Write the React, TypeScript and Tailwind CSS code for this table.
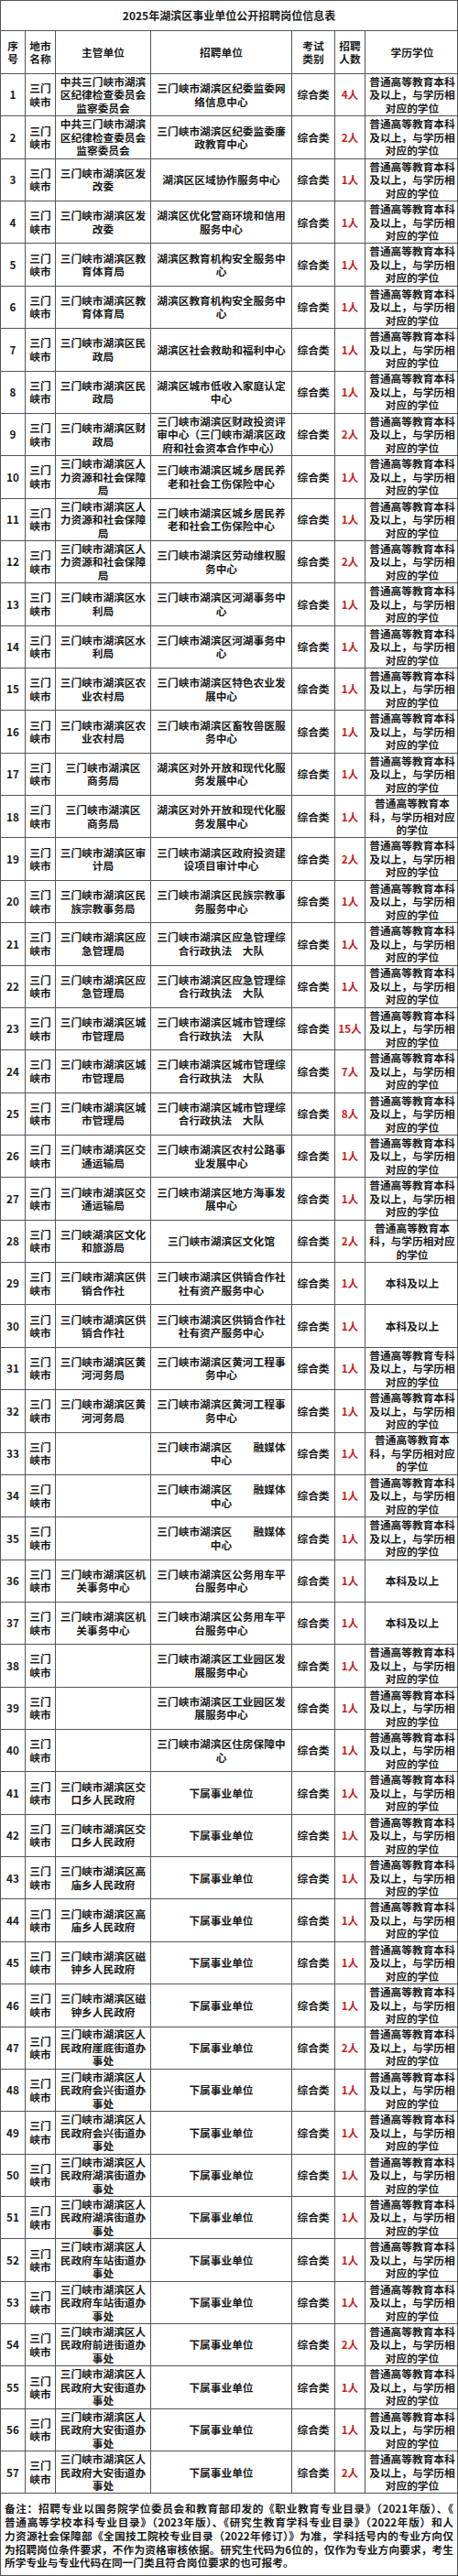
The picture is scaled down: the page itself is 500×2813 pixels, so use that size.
const SM = "三门\n峡市";
const STD = "普通高等教育本科\n及以上，与学历相\n对应的学位";
const BK = "普通高等教育本\n科，与学历相对应\n的学位";
const BKYS = "本科及以上";
const ZK = "普通高等教育专科\n及以上，与学历相\n对应的学位";

const JW = "中共三门峡市湖滨\n区纪律检查委员会\n监察委员会";
const RS = "三门峡市湖滨区人\n力资源和社会保障\n局";
const CG = "三门峡市湖滨区城\n市管理局";
const CGU = "三门峡市湖滨区城市管理综\n合行政执法　大队";
const RMT = "三门峡市湖滨区　　融媒体\n中心";
const XS = "下属事业单位";

const jd = (name: string) => `三门峡市湖滨区人\n民政府${name}街道办\n事处`;

// [主管单位, 招聘单位, 人数, 学历]
const rows: [string, string, string, string][] = [
  [JW, "三门峡市湖滨区纪委监委网\n络信息中心", "4人", STD],
  [JW, "三门峡市湖滨区纪委监委廉\n政教育中心", "2人", STD],
  ["三门峡市湖滨区发\n改委", "湖滨区区域协作服务中心", "1人", STD],
  ["三门峡市湖滨区发\n改委", "湖滨区优化营商环境和信用\n服务中心", "1人", STD],
  ["三门峡市湖滨区教\n育体育局", "湖滨区教育机构安全服务中\n心", "1人", STD],
  ["三门峡市湖滨区教\n育体育局", "湖滨区教育机构安全服务中\n心", "1人", STD],
  ["三门峡市湖滨区民\n政局", "湖滨区社会救助和福利中心", "1人", STD],
  ["三门峡市湖滨区民\n政局", "湖滨区城市低收入家庭认定\n中心", "1人", STD],
  ["三门峡市湖滨区财\n政局", "三门峡市湖滨区财政投资评\n审中心（三门峡市湖滨区政\n府和社会资本合作中心）", "2人", STD],
  [RS, "三门峡市湖滨区城乡居民养\n老和社会工伤保险中心", "1人", STD],
  [RS, "三门峡市湖滨区城乡居民养\n老和社会工伤保险中心", "1人", STD],
  [RS, "三门峡市湖滨区劳动维权服\n务中心", "2人", STD],
  ["三门峡市湖滨区水\n利局", "三门峡市湖滨区河湖事务中\n心", "1人", STD],
  ["三门峡市湖滨区水\n利局", "三门峡市湖滨区河湖事务中\n心", "1人", STD],
  ["三门峡市湖滨区农\n业农村局", "三门峡市湖滨区特色农业发\n展中心", "1人", STD],
  ["三门峡市湖滨区农\n业农村局", "三门峡市湖滨区畜牧兽医服\n务中心", "1人", STD],
  ["三门峡市湖滨区\n商务局", "湖滨区对外开放和现代化服\n务发展中心", "1人", STD],
  ["三门峡市湖滨区\n商务局", "湖滨区对外开放和现代化服\n务发展中心", "1人", BK],
  ["三门峡市湖滨区审\n计局", "三门峡市湖滨区政府投资建\n设项目审计中心", "2人", STD],
  ["三门峡市湖滨区民\n族宗教事务局", "三门峡市湖滨区民族宗教事\n务服务中心", "1人", STD],
  ["三门峡市湖滨区应\n急管理局", "三门峡市湖滨区应急管理综\n合行政执法　大队", "1人", STD],
  ["三门峡市湖滨区应\n急管理局", "三门峡市湖滨区应急管理综\n合行政执法　大队", "1人", STD],
  [CG, CGU, "15人", STD],
  [CG, CGU, "7人", STD],
  [CG, CGU, "8人", STD],
  ["三门峡市湖滨区交\n通运输局", "三门峡市湖滨区农村公路事\n业发展中心", "1人", STD],
  ["三门峡市湖滨区交\n通运输局", "三门峡市湖滨区地方海事发\n展中心", "1人", STD],
  ["三门峡湖滨区文化\n和旅游局", "三门峡市湖滨区文化馆", "2人", BK],
  ["三门峡市湖滨区供\n销合作社", "三门峡市湖滨区供销合作社\n社有资产服务中心", "1人", BKYS],
  ["三门峡市湖滨区供\n销合作社", "三门峡市湖滨区供销合作社\n社有资产服务中心", "1人", BKYS],
  ["三门峡市湖滨区黄\n河河务局", "三门峡市湖滨区黄河工程事\n务中心", "1人", ZK],
  ["三门峡市湖滨区黄\n河河务局", "三门峡市湖滨区黄河工程事\n务中心", "1人", STD],
  ["", RMT, "1人", BK],
  ["", RMT, "1人", STD],
  ["", RMT, "1人", STD],
  ["三门峡市湖滨区机\n关事务中心", "三门峡市湖滨区公务用车平\n台服务中心", "1人", BKYS],
  ["三门峡市湖滨区机\n关事务中心", "三门峡市湖滨区公务用车平\n台服务中心", "1人", BKYS],
  ["", "三门峡市湖滨区工业园区发\n展服务中心", "1人", STD],
  ["", "三门峡市湖滨区工业园区发\n展服务中心", "1人", STD],
  ["", "三门峡市湖滨区住房保障中\n心", "1人", STD],
  ["三门峡市湖滨区交\n口乡人民政府", XS, "1人", STD],
  ["三门峡市湖滨区交\n口乡人民政府", XS, "1人", STD],
  ["三门峡市湖滨区高\n庙乡人民政府", XS, "1人", STD],
  ["三门峡市湖滨区高\n庙乡人民政府", XS, "1人", STD],
  ["三门峡市湖滨区磁\n钟乡人民政府", XS, "1人", STD],
  ["三门峡市湖滨区磁\n钟乡人民政府", XS, "1人", STD],
  [jd("崖底"), XS, "2人", STD],
  [jd("会兴"), XS, "1人", STD],
  [jd("会兴"), XS, "1人", STD],
  [jd("湖滨"), XS, "1人", STD],
  [jd("湖滨"), XS, "1人", STD],
  [jd("车站"), XS, "1人", STD],
  [jd("车站"), XS, "1人", STD],
  [jd("前进"), XS, "2人", STD],
  [jd("大安"), XS, "1人", STD],
  [jd("大安"), XS, "1人", STD],
  [jd("大安"), XS, "2人", STD],
];

const noteLines = [
  "备注：招聘专业以国务院学位委员会和教育部印发的《职业教育专业目录》（2021年版）、《",
  "普通高等学校本科专业目录》（2023年版）、《研究生教育学科专业目录》（2022年版）和人",
  "力资源社会保障部《全国技工院校专业目录（2022年修订）》为准，学科括号内的专业方向仅",
  "为招聘岗位条件要求，不作为资格审核依据。研究生代码为6位的，仅作为专业方向要求，考生",
];

const grid = "grid grid-cols-[27px_33px_104px_154px_47px_33px_102px]";
const cell = "flex items-center justify-center text-center whitespace-pre-line border-r border-[#555] last:border-r-0";

export default function App() {
  return (
    <div className="w-[500px] bg-white text-[#1a1a1a] font-['Noto_Sans_CJK_SC',sans-serif] font-bold text-[11.7px] leading-[14.5px]">
      <div className="border border-[#555]">
        <div className="h-[33px] flex items-center justify-center border-b border-[#555] text-[12px]">
          2025年湖滨区事业单位公开招聘岗位信息表
        </div>
        <div className={`${grid} h-[47px] border-b border-[#555]`}>
          <div className={cell}>{"序\n号"}</div>
          <div className={cell}>{"地市\n名称"}</div>
          <div className={cell}>主管单位</div>
          <div className={cell}>招聘单位</div>
          <div className={cell}>{"考试\n类别"}</div>
          <div className={cell}>{"招聘\n人数"}</div>
          <div className={cell}>学历学位</div>
        </div>
        {rows.map(([dept, unit, count, edu], i) => (
          <div key={i} className={`${grid} h-[46.37px] border-b border-[#555]`}>
            <div className={cell}>{i + 1}</div>
            <div className={cell}>{SM}</div>
            <div className={`${cell} px-[3px]`}>{dept}</div>
            <div className={`${cell} px-[4px]`}>{unit}</div>
            <div className={cell}>综合类</div>
            <div className={`${cell} text-[#c81e1e]`}>{count}</div>
            <div className={`${cell} px-[3px]`}>{edu}</div>
          </div>
        ))}
        <div className="h-[89px] px-[4px] pt-[9px] leading-[14.7px]">
          {noteLines.map((line, i) => (
            <div key={i} className="text-justify [text-align-last:justify]">
              {line}
            </div>
          ))}
          <div>所学专业与专业代码在同一门类且符合岗位要求的也可报考。</div>
        </div>
      </div>
    </div>
  );
}
